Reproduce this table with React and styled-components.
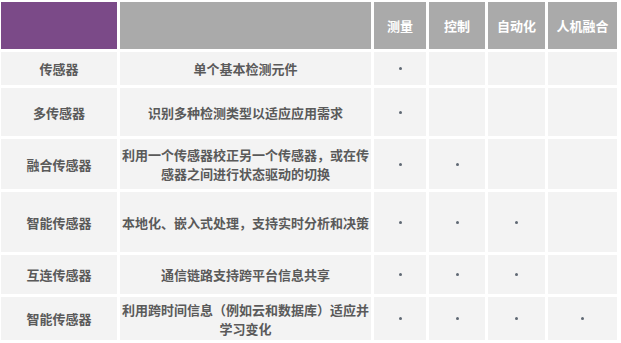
import React from "react";
import styled, { createGlobalStyle } from "styled-components";

const Global = createGlobalStyle`
  html, body { margin: 0; padding: 0; background: #ffffff; }
  body { font-family: "Noto Sans CJK SC", "Noto Sans", sans-serif; }
`;

const Grid = styled.div`
  display: grid;
  grid-template-columns: 116px 251px 52px 56px 57px 69px;
  grid-template-rows: 47px 33px 48px 50px 60px 39px 43px;
  gap: 3px;
  padding: 2px 0 0 1px;
  width: max-content;
`;

const Cell = styled.div`
  display: flex;
  align-items: center;
  justify-content: center;
  text-align: center;
  background: ${(p) => (p.$accent ? "#7b4a88" : p.$head ? "#aaaaaa" : "#f3f3f3")};
  color: ${(p) => (p.$head ? "#ffffff" : "#5a5a5a")};
  font-size: 13px;
  font-weight: 700;
  line-height: 19px;
  padding: 0 2px;
  box-sizing: border-box;
`;

const Dot = styled.span`
  display: block;
  width: 3px;
  height: 3px;
  border-radius: 50%;
  background: #5f6873;
`;

const heads = ["测量", "控制", "自动化", "人机融合"];

const rows = [
  { name: "传感器", desc: "单个基本检测元件", marks: [1, 0, 0, 0] },
  { name: "多传感器", desc: "识别多种检测类型以适应应用需求", marks: [1, 0, 0, 0] },
  { name: "融合传感器", desc: "利用一个传感器校正另一个传感器，或在传感器之间进行状态驱动的切换", marks: [1, 1, 0, 0] },
  { name: "智能传感器", desc: "本地化、嵌入式处理，支持实时分析和决策", marks: [1, 1, 1, 0] },
  { name: "互连传感器", desc: "通信链路支持跨平台信息共享", marks: [1, 1, 1, 0] },
  { name: "智能传感器", desc: "利用跨时间信息（例如云和数据库）适应并学习变化", marks: [1, 1, 1, 1] },
];

export default function App() {
  return (
    <>
      <Global />
      <Grid>
        <Cell $accent />
        <Cell $head />
        {heads.map((h) => (
          <Cell $head key={h}>{h}</Cell>
        ))}
        {rows.map((r, i) => (
          <React.Fragment key={i}>
            <Cell>{r.name}</Cell>
            <Cell>{r.desc}</Cell>
            {r.marks.map((m, j) => (
              <Cell key={j}>{m ? <Dot /> : null}</Cell>
            ))}
          </React.Fragment>
        ))}
      </Grid>
    </>
  );
}
